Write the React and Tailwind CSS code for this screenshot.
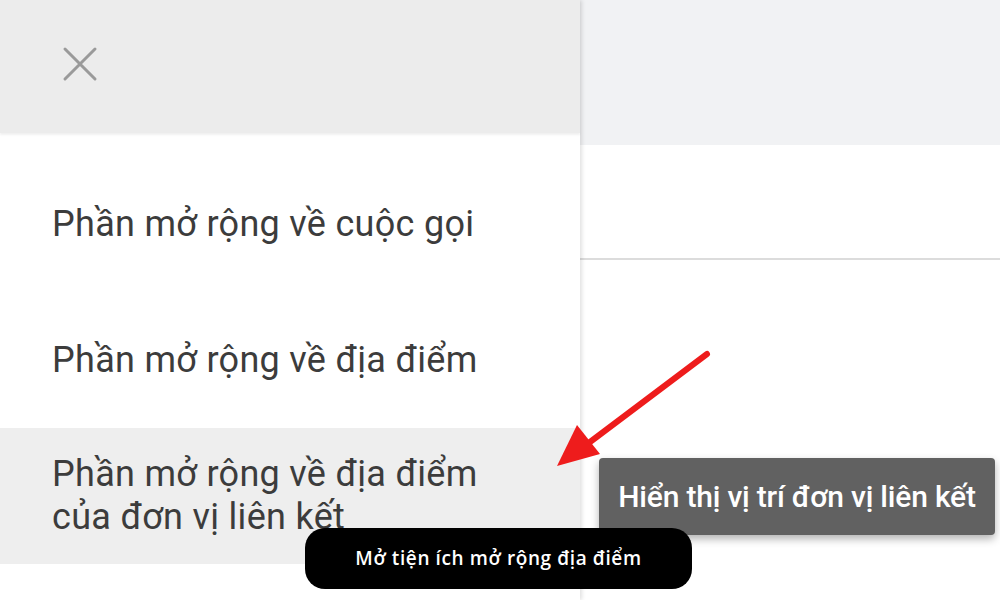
import React from "react";

export default function App() {
  const items = [
    { text: "Phần mở rộng về cuộc gọi", active: false },
    { text: "Phần mở rộng về địa điểm", active: false },
    { text: "Phần mở rộng về địa điểm\ncủa đơn vị liên kết", active: true },
  ];
  return (
    <div className="relative w-[1000px] h-[600px] overflow-hidden bg-white" style={{ fontFamily: "Roboto, 'Liberation Sans', sans-serif" }}>
      <div className="flex h-full">
        <div className="relative z-10 w-[580px] h-full bg-white flex flex-col shadow-[2px_0_4px_rgba(0,0,0,0.12)]">
          <div className="h-[133px] bg-[#ececec] flex items-center pl-[62px] shadow-[0_2px_2px_rgba(0,0,0,0.06)]">
            <svg width="36" height="36" viewBox="0 0 36 36" className="mt-[-6px]">
              <path d="M3 3 L33 33 M33 3 L3 33" stroke="#9a9a9a" strokeWidth="3" strokeLinecap="round" />
            </svg>
          </div>
          <div className="h-[23px]" />
          {items.map((it, i) => (
            <div
              key={i}
              className={`h-[136px] flex items-center pl-[52px] text-[36px] leading-[43px] tracking-[0.3px] text-[#3c3c3c] whitespace-pre-line ${it.active ? "bg-[#eeeeee]" : ""}`}
            >
              {it.text}
            </div>
          ))}
        </div>
        <div className="flex-1 flex flex-col">
          <div className="h-[145px] bg-[#f1f2f4] shadow-[0_2px_3px_rgba(0,0,0,0.1)]" />
          <div className="h-[115px] bg-white border-b-2 border-[#dcdcdc]" />
          <div className="flex-1 bg-white" />
        </div>
      </div>

      <svg className="absolute left-0 top-0 z-20 pointer-events-none" width="1000" height="600">
        <line x1="707" y1="354" x2="590" y2="442" stroke="#ee1c1c" strokeWidth="6" strokeLinecap="round" />
        <polygon points="557,466 577,425 600,454" fill="#ee1c1c" />
      </svg>

      <div className="absolute z-20 left-[599px] top-[458px] w-[396px] h-[77px] bg-[#616161] rounded-[4px] shadow-[0_4px_8px_rgba(0,0,0,0.3)] flex items-center justify-center text-white text-[30px] font-medium tracking-[-0.2px]">
        Hiển thị vị trí đơn vị liên kết
      </div>

      <div className="absolute z-30 left-[305px] top-[528px] w-[387px] h-[61px] bg-black rounded-[20px] flex items-center justify-center text-white text-[19px] font-semibold tracking-[0.6px]" style={{ fontFamily: "'Open Sans', Inter, sans-serif" }}>
        Mở tiện ích mở rộng địa điểm
      </div>
    </div>
  );
}
